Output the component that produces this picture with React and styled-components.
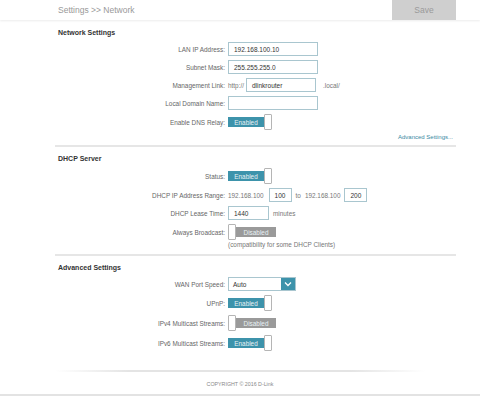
import React from "react";
import styled, { createGlobalStyle } from "styled-components";

const GlobalStyle = createGlobalStyle`
  body {
    margin: 0;
    background: #ffffff;
    font-family: Arial, "Liberation Sans", sans-serif;
  }
`;

export default function App() {
  return (
    <Page>
      <GlobalStyle />
      <Header>
        <Crumb>Settings &gt;&gt; Network</Crumb>
        <SaveButton>Save</SaveButton>
      </Header>

      <Main>
        <Section>
          <SectionTitle>Network Settings</SectionTitle>
          <Form gap={4}>
            <Row>
              <Label>LAN IP Address:</Label>
              <Input w={90}>192.168.100.10</Input>
            </Row>
            <Row>
              <Label>Subnet Mask:</Label>
              <Input w={90}>255.255.255.0</Input>
            </Row>
            <Row>
              <Label>Management Link:</Label>
              <Inline>
                <Note right={2}>http://</Note>
                <Input w={70}>dlinkrouter</Input>
                <Note left={7}>.local/</Note>
              </Inline>
            </Row>
            <Row>
              <Label>Local Domain Name:</Label>
              <Input w={90} />
            </Row>
            <Row tall>
              <Label>Enable DNS Relay:</Label>
              <Toggle on />
            </Row>
          </Form>
          <LinkRow>
            <MoreLink>Advanced Settings...</MoreLink>
          </LinkRow>
        </Section>

        <Section>
          <SectionTitle>DHCP Server</SectionTitle>
          <Form gap={4}>
            <Row tall>
              <Label>Status:</Label>
              <Toggle on />
            </Row>
            <Row>
              <Label>DHCP IP Address Range:</Label>
              <Inline>
                <Note right={5}>192.168.100</Note>
                <Input w={23}>100</Input>
                <Note left={4} right={4}>to</Note>
                <Note right={4}>192.168.100</Note>
                <Input w={23}>200</Input>
              </Inline>
            </Row>
            <Row>
              <Label>DHCP Lease Time:</Label>
              <Inline>
                <Input w={41}>1440</Input>
                <Note left={4}>minutes</Note>
              </Inline>
            </Row>
            <Row tall>
              <Label>Always Broadcast:</Label>
              <Toggle />
            </Row>
          </Form>
          <Hint>(compatibility for some DHCP Clients)</Hint>
        </Section>

        <Section last>
          <SectionTitle>Advanced Settings</SectionTitle>
          <Form gap={4}>
            <Row>
              <Label>WAN Port Speed:</Label>
              <Select>
                <SelectValue>Auto</SelectValue>
                <SelectArrow>
                  <svg width="8" height="6" viewBox="0 0 8 6">
                    <path d="M1 1.5 L4 4.5 L7 1.5" fill="none" stroke="#fff" strokeWidth="1.3" />
                  </svg>
                </SelectArrow>
              </Select>
            </Row>
            <Row tall>
              <Label>UPnP:</Label>
              <Toggle on />
            </Row>
            <Row tall>
              <Label>IPv4 Multicast Streams:</Label>
              <Toggle />
            </Row>
            <Row tall>
              <Label>IPv6 Multicast Streams:</Label>
              <Toggle on />
            </Row>
          </Form>
        </Section>
      </Main>

      <Footer>
        <FooterRule />
        <Copyright>COPYRIGHT © 2016 D-Link</Copyright>
      </Footer>
    </Page>
  );
}

function Toggle({ on }) {
  return (
    <ToggleWrap>
      {on ? (
        <>
          <ToggleBody on>Enabled</ToggleBody>
          <Knob />
        </>
      ) : (
        <>
          <Knob />
          <ToggleBody>Disabled</ToggleBody>
        </>
      )}
    </ToggleWrap>
  );
}

const Page = styled.div`
  width: 480px;
  height: 396px;
  display: flex;
  flex-direction: column;
  overflow: hidden;
  color: #555;
`;

const Header = styled.header`
  height: 20px;
  display: flex;
  align-items: stretch;
  justify-content: space-between;
  padding: 0 24px 0 58px;
  box-shadow: 0 1px 2px rgba(0, 0, 0, 0.08);
`;

const Crumb = styled.div`
  display: flex;
  align-items: center;
  font-size: 8.5px;
  color: #999;
`;

const SaveButton = styled.div`
  width: 64px;
  display: flex;
  align-items: center;
  justify-content: center;
  background: #cfcfcf;
  color: #9a9a9a;
  font-size: 8.5px;
`;

const Main = styled.main`
  padding: 1px 24px 0 55px;
`;

const Section = styled.section`
  padding: 7px 0 5px;
  border-bottom: ${(p) => (p.last ? "none" : "2px solid #e6e6e6")};
`;

const SectionTitle = styled.h2`
  margin: 0 0 4px 3px;
  font-size: 7px;
  font-weight: bold;
  color: #333;
  line-height: 10px;
`;

const Form = styled.div`
  display: flex;
  flex-direction: column;
  gap: ${(p) => p.gap}px;
`;

const Row = styled.div`
  display: grid;
  grid-template-columns: 170px 1fr;
  column-gap: 3px;
  align-items: center;
  min-height: ${(p) => (p.tall ? "16px" : "14px")};
`;

const Label = styled.span`
  text-align: right;
  font-size: 6.4px;
  color: #666;
`;

const Inline = styled.div`
  display: flex;
  align-items: center;
`;

const Note = styled.span`
  font-size: 6.4px;
  color: #777;
  padding-left: ${(p) => p.left || 0}px;
  padding-right: ${(p) => p.right || 0}px;
`;

const Input = styled.div`
  box-sizing: border-box;
  width: ${(p) => p.w}px;
  height: 14px;
  border: 1px solid #a9c6cf;
  padding: 0 5px;
  display: flex;
  align-items: center;
  font-size: 6.5px;
  color: #333;
  background: #fff;
`;

const ToggleWrap = styled.div`
  display: flex;
  align-items: center;
`;

const ToggleBody = styled.div`
  width: ${(p) => (p.on ? 36 : 40)}px;
  height: 10px;
  background: ${(p) => (p.on ? "#3d93ab" : "#9a9a9a")};
  color: #e8f2f5;
  font-size: 6.4px;
  display: flex;
  align-items: center;
  justify-content: center;
`;

const Knob = styled.div`
  box-sizing: border-box;
  width: 8px;
  height: 16px;
  border: 1px solid #b5b5b5;
  border-radius: 1px;
  background: #fff;
`;

const LinkRow = styled.div`
  display: flex;
  justify-content: flex-end;
  padding-right: 3px;
  margin-top: 4px;
`;

const MoreLink = styled.span`
  font-size: 6px;
  color: #3a8aa3;
`;

const Hint = styled.div`
  margin: 1px 0 1px 173px;
  font-size: 6.4px;
  color: #777;
`;

const Select = styled.div`
  box-sizing: border-box;
  width: 68px;
  height: 14px;
  display: flex;
  border: 1px solid #a9c6cf;
`;

const SelectValue = styled.div`
  flex: 1;
  display: flex;
  align-items: center;
  padding-left: 4px;
  font-size: 6.5px;
  color: #333;
`;

const SelectArrow = styled.div`
  width: 14px;
  background: #3d93ab;
  display: flex;
  align-items: center;
  justify-content: center;
`;

const Footer = styled.footer`
  margin-top: auto;
  border-bottom: 2px solid #e3e3e3;
  padding-bottom: 7px;
`;

const FooterRule = styled.div`
  height: 2px;
  margin: 0 55px;
  background: linear-gradient(to right, rgba(230,230,230,0), #e4e4e4 20%, #e4e4e4 80%, rgba(230,230,230,0));
`;

const Copyright = styled.div`
  margin-top: 9px;
  text-align: center;
  font-size: 5.3px;
  color: #888;
`;
